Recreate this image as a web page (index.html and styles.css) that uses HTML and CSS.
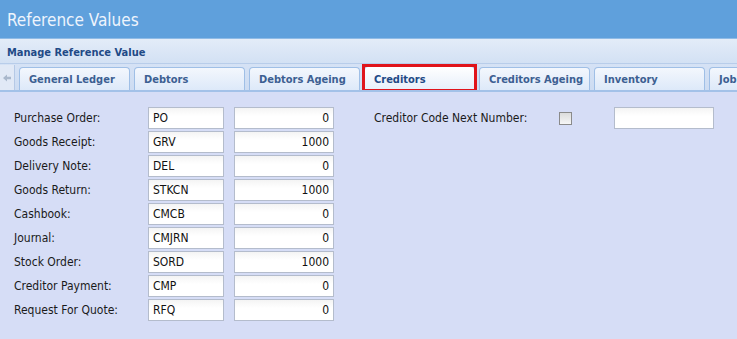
FILE: index.html
```html
<!DOCTYPE html>
<html lang="en">

<head>
    <meta charset="UTF-8">
    <title>Reference Values</title>
    <link rel="stylesheet" href="styles.css">
</head>

<body>
    <div class="title-bar">Reference Values</div>
    <div class="sub-bar">Manage Reference Value</div>
    <div class="tab-strip">
        <div class="tab-scroll">
            <svg viewBox="0 0 10 10" width="10" height="10">
                <path d="M1 5 L5 1.5 L5 3.8 L9 3.8 L9 6.2 L5 6.2 L5 8.5 Z" fill="#a9b8cc"></path>
            </svg>
        </div>
        <div class="tab">General Ledger</div>
        <div class="tab">Debtors</div>
        <div class="tab">Debtors Ageing</div>
        <div class="tab active">Creditors</div>
        <div class="tab">Creditors Ageing</div>
        <div class="tab">Inventory</div>
        <div class="tab">Job</div>
    </div>
    <div class="panel">
        <div class="form-left">
            <label>Purchase Order:</label>
            <input class="code" value="PO">
            <input class="num" value="0">

            <label>Goods Receipt:</label>
            <input class="code" value="GRV">
            <input class="num" value="1000">

            <label>Delivery Note:</label>
            <input class="code" value="DEL">
            <input class="num" value="0">

            <label>Goods Return:</label>
            <input class="code" value="STKCN">
            <input class="num" value="1000">

            <label>Cashbook:</label>
            <input class="code" value="CMCB">
            <input class="num" value="0">

            <label>Journal:</label>
            <input class="code" value="CMJRN">
            <input class="num" value="0">

            <label>Stock Order:</label>
            <input class="code" value="SORD">
            <input class="num" value="1000">

            <label>Creditor Payment:</label>
            <input class="code" value="CMP">
            <input class="num" value="0">

            <label>Request For Quote:</label>
            <input class="code" value="RFQ">
            <input class="num" value="0">
        </div>
        <div class="form-right">
            <label>Creditor Code Next Number:</label>
            <span class="check"></span>
            <input class="next" value="">
        </div>
    </div>
</body>

</html>
```

FILE: styles.css
```css
body {
    margin: 0;
    padding: 0;
    font-family: "DejaVu Sans Condensed", "DejaVu Sans", sans-serif;
    background: #d6ddf6;
    height: 339px;
    overflow: hidden;
}

.title-bar {
    height: 38px;
    background: #5fa0dc;
    color: #eef4fc;
    font-size: 17px;
    line-height: 40px;
    padding-left: 7px;
    border-bottom: 1px solid #8fbbe6;
}

.sub-bar {
    height: 24px;
    background: linear-gradient(#e3ecf8, #d3e1f4);
    color: #1f4a86;
    font-size: 11px;
    font-weight: bold;
    line-height: 27px;
    padding-left: 7px;
    border-bottom: 1px solid #b8cdea;
}

.tab-strip {
    display: flex;
    align-items: flex-end;
    gap: 4px;
    height: 25px;
    padding-top: 1px;
    background: linear-gradient(#d5e2f5, #cddcf2);
    border-bottom: 2px solid #a3c1e8;
    overflow: hidden;
}

.tab-scroll {
    flex: none;
    width: 14px;
    height: 25px;
    display: flex;
    align-items: center;
    justify-content: center;
    background: #e1e9f6;
    border-right: 1px solid #b5c9e6;
}

.tab {
    flex: none;
    width: 100px;
    height: 22px;
    padding-left: 9px;
    background: linear-gradient(#f3f7fd, #dde9f9);
    border: 1px solid #9fbfe6;
    border-bottom: none;
    border-radius: 4px 4px 0 0;
    color: #3c5f92;
    font-size: 11px;
    font-weight: bold;
    line-height: 24px;
    box-sizing: content-box;
}

.tab.active {
    color: #1f4a86;
    background: linear-gradient(#ffffff, #e6eefa);
    height: 23px;
    line-height: 25px;
    position: relative;
}

.tab.active::after {
    content: '';
    position: absolute;
    top: -3px;
    left: -3px;
    right: -3px;
    bottom: -2px;
    border: 3px solid #e0141b;
}

.panel {
    display: flex;
    padding: 15px 0 0 14px;
}

.form-left {
    display: grid;
    grid-template-columns: 134px 86px 100px;
    grid-auto-rows: 22px;
    row-gap: 2px;
    align-items: center;
}

.form-right {
    display: flex;
    align-items: center;
    height: 22px;
    margin-left: 40px;
}

label {
    font-size: 12px;
    color: #1a1a1a;
}

input {
    font-family: "DejaVu Sans Condensed", "DejaVu Sans", sans-serif;
    font-size: 12px;
    color: #111;
    height: 22px;
    box-sizing: border-box;
    border: 1px solid #b4bccc;
    background: linear-gradient(#f4f4f4, #ffffff 40%);
    padding: 0 4px;
    margin: 0;
    outline: none;
}

.code {
    width: 76px;
}

.num {
    width: 100px;
    text-align: right;
}

.form-right label {
    width: 185px;
}

.check {
    width: 11px;
    height: 11px;
    border: 1px solid #8a8a8a;
    background: linear-gradient(#dcdcdc, #f6f6f6);
    margin-right: 42px;
}

.next {
    width: 100px;
}
```
